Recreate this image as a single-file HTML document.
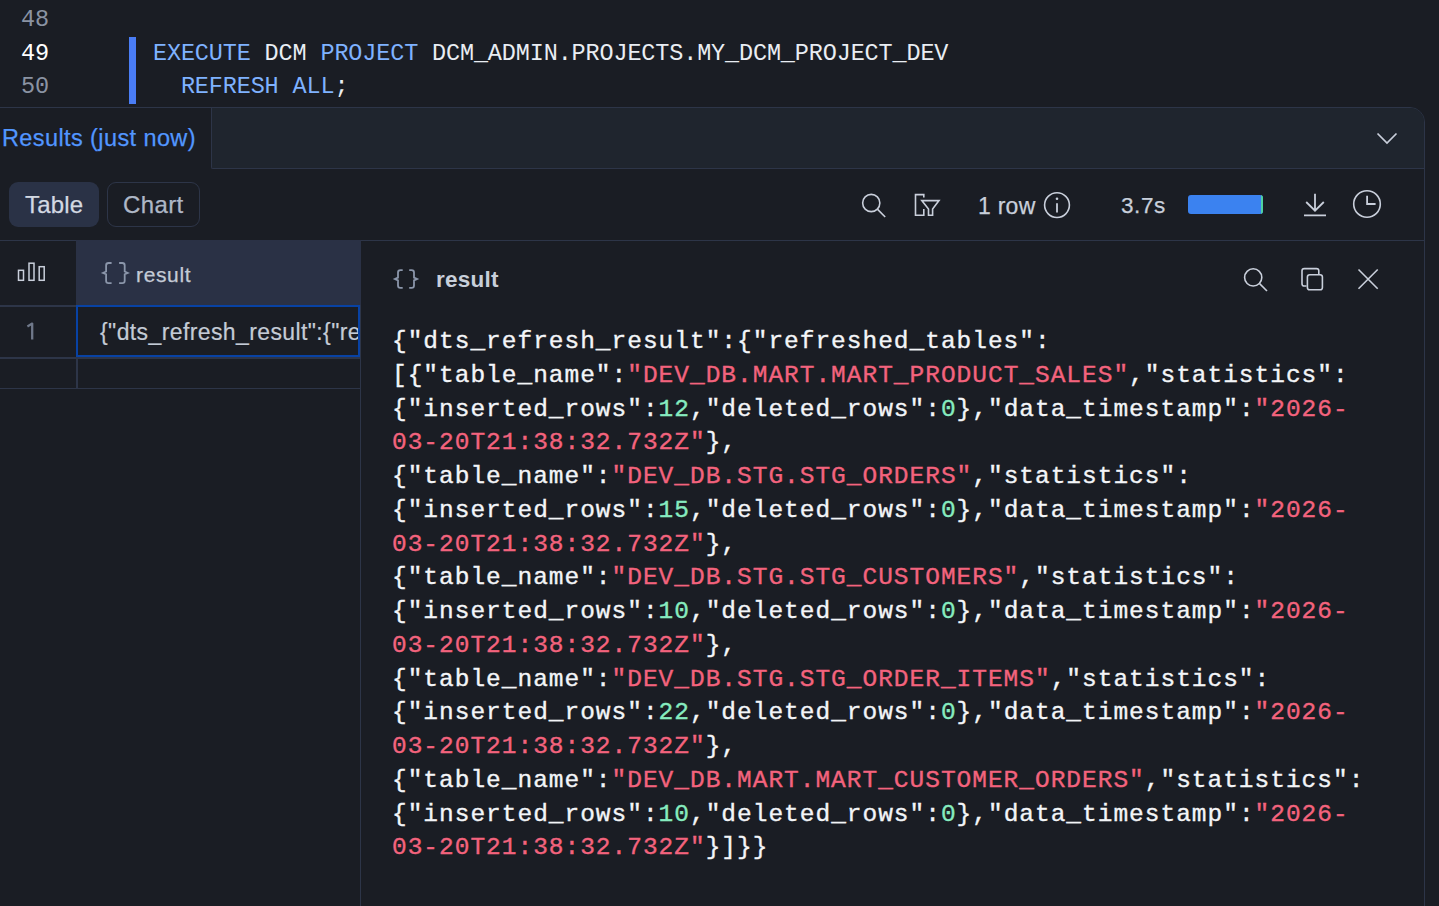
<!DOCTYPE html>
<html><head><meta charset="utf-8">
<style>
*{box-sizing:border-box;margin:0;padding:0}
html,body{width:1439px;height:906px;overflow:hidden;background:#1a1d24}
body{position:relative;font-family:"Liberation Sans",sans-serif;color:#c9d1dc}
.abs{position:absolute;white-space:pre;line-height:1;-webkit-text-stroke:0.25px currentColor}
.mono{font-family:"Liberation Mono",monospace}
.ln{position:absolute;left:21px;font-size:23.5px;letter-spacing:-0.15px;color:#8a93a3;line-height:1;white-space:pre}
.code{position:absolute;left:153px;font-size:23.5px;letter-spacing:-0.15px;line-height:1;white-space:pre;color:#e9edf3}
.kw{color:#7fb2ff}
#panel{position:absolute;left:-20px;top:107px;width:1445px;height:830px;border:1px solid #2d3548;border-top-right-radius:15px;background:#1a1d24}
#strip{position:absolute;left:211px;top:108px;width:1213px;height:61px;background:#1f252e;border-left:1px solid #2d3548;border-bottom:1px solid #2d3548;border-top-right-radius:14px;border-bottom-left-radius:2px}
.btn{position:absolute;top:182px;height:45px;border-radius:9px}
.hline{position:absolute;height:1px;background:#2d3548}
.vline{position:absolute;width:1px;background:#2d3548}
.json{position:absolute;left:392px;top:325px;font-size:24.5px;letter-spacing:0.98px;line-height:33.75px;color:#f3f5f8;white-space:pre;-webkit-text-stroke:0.35px currentColor}
.s{color:#f3637d}
.n{color:#86ebbf}
svg{position:absolute;overflow:visible;z-index:5}
.ic{fill:none;stroke:#c9cfdb;stroke-width:1.6}
</style></head><body>

<!-- editor -->
<div class="ln mono" style="top:8px">48</div>
<div class="ln mono" style="top:42px;color:#ffffff">49</div>
<div class="ln mono" style="top:75px">50</div>
<div class="abs" style="left:129px;top:37px;width:7px;height:67px;background:#4a7df5"></div>
<div class="code mono" style="top:42px"><span class="kw">EXECUTE</span> DCM <span class="kw">PROJECT</span> DCM_ADMIN.PROJECTS.MY_DCM_PROJECT_DEV</div>
<div class="code mono" style="top:75px">  <span class="kw">REFRESH</span> <span class="kw">ALL</span>;</div>

<!-- results panel -->
<div id="panel"></div>
<div id="strip"></div>
<div class="abs" style="left:2px;top:127px;font-size:23.5px;letter-spacing:0.4px;color:#5296ff">Results (just now)</div>
<svg style="left:0;top:0" width="1439" height="906">
  <path class="ic" d="M1377.5 133.5 L1387 143 L1396.5 133.5" style="stroke-width:1.7"/>
</svg>

<!-- toolbar -->
<div class="btn" style="left:9px;width:90px;background:#2a3246"></div>
<div class="btn" style="left:107px;width:93px;border:1px solid #2d3548"></div>
<div class="abs" style="left:25px;top:193px;font-size:24px;letter-spacing:0.15px;color:#d3d9e2">Table</div>
<div class="abs" style="left:123px;top:193px;font-size:24px;letter-spacing:0.4px;color:#aeb7c6">Chart</div>

<div class="abs" style="left:978px;top:195px;font-size:23px;letter-spacing:0.25px;color:#c8cfdb">1 row</div>
<div class="abs" style="left:1121px;top:195px;font-size:22.5px;letter-spacing:0.6px;color:#c8cfdb">3.7s</div>
<div class="abs" style="left:1188px;top:195px;width:75px;height:19px;border-radius:3px;background:#3b82f0;overflow:hidden"><div style="position:absolute;right:0;top:0;width:2px;height:19px;background:#4fd1a0"></div></div>

<svg style="left:0;top:0" width="1439" height="906">
  <!-- search -->
  <circle class="ic" cx="871.25" cy="203" r="8.6"/>
  <path class="ic" d="M877.6 209.4 L885.2 217"/>
  <!-- filter -->
  <path class="ic" d="M923.8 197.5 L923.8 194.6 L915.5 194.6 L915.5 215.3 L923.8 215.3 L923.8 209"/>
  <path class="ic" d="M921.8 200.6 L939 200.6 L932.6 209 L932.6 215.3 L928.5 215.3 L928.5 209 Z"/>
  <!-- info -->
  <circle class="ic" cx="1057" cy="205.1" r="12.4"/>
  <circle cx="1057" cy="198.8" r="1.3" fill="#c9cfdb"/>
  <path class="ic" d="M1057 203.2 L1057 212.5" style="stroke-width:1.8"/>
  <!-- download -->
  <path class="ic" d="M1315 193.7 L1315 210.5 M1306.2 202 L1315 210.7 L1323.8 202 M1304 215.4 L1326 215.4" style="stroke-width:1.8"/>
  <!-- clock -->
  <circle class="ic" cx="1367" cy="204" r="13.3"/>
  <path class="ic" d="M1367.1 195.8 L1367.1 204 L1375.6 204" style="stroke-width:1.8"/>
  <!-- table header bar icon -->
  <rect class="ic" x="18.5" y="270.3" width="5" height="10" style="stroke-width:1.5"/>
  <rect class="ic" x="29" y="263.2" width="5" height="17.1" style="stroke-width:1.5"/>
  <rect class="ic" x="39.2" y="266.7" width="5" height="13.6" style="stroke-width:1.5"/>
  <!-- detail header icons -->
  <circle class="ic" cx="1253.2" cy="277.4" r="8.6"/>
  <path class="ic" d="M1259.6 283.6 L1267 291"/>
  <path class="ic" d="M1306.5 286 L1304.3 286 Q1302 286 1302 283.7 L1302 270.8 Q1302 268.6 1304.3 268.6 L1316.5 268.6 Q1318.8 268.6 1318.8 270.8 L1318.8 274.5"/>
  <rect class="ic" x="1307.4" y="274.7" width="15" height="15" rx="2.3"/>
  <path class="ic" d="M1358.5 269.5 L1377.7 288.7 M1377.7 269.5 L1358.5 288.7"/>
  <!-- row number 1 -->
  <path class="ic" style="stroke:#6f788a;stroke-width:2.3;stroke-linejoin:round" d="M27.4 326.4 L32.2 323.6 L32.2 339.4"/>
  <!-- braces -->
  <path class="ic" style="stroke:#8b96aa;stroke-width:1.8" d="M111.6 263 L108.5 263 Q106.1 263 106.1 265.4 L106.1 271.5 L103.0 272.9 L106.1 274.29999999999995 L106.1 280.8 Q106.1 283.2 108.5 283.2 L111.6 283.2"/>
  <path class="ic" style="stroke:#8b96aa;stroke-width:1.8" d="M119.1 263 L122.3 263 Q124.7 263 124.7 265.4 L124.7 271.5 L127.8 272.9 L124.7 274.29999999999995 L124.7 280.8 Q124.7 283.2 122.3 283.2 L119.1 283.2"/>
  <path class="ic" style="stroke:#8b96aa;stroke-width:1.8" d="M402.7 270.2 L400.4 270.2 Q398 270.2 398 272.59999999999997 L398 277.6 L394.9 279 L398 280.4 L398 285.40000000000003 Q398 287.8 400.4 287.8 L402.7 287.8"/>
  <path class="ic" style="stroke:#8b96aa;stroke-width:1.8" d="M409.2 270.2 L411.6 270.2 Q414 270.2 414 272.59999999999997 L414 277.6 L417.1 279 L414 280.4 L414 285.40000000000003 Q414 287.8 411.6 287.8 L409.2 287.8"/>
</svg>

<div class="hline" style="left:0;top:240px;width:1424px"></div>

<!-- table -->
<div class="abs" style="left:76px;top:240px;width:285px;height:65px;background:#2a3145"></div>
<div class="hline" style="left:0;top:305px;width:76px;height:2px"></div>
<div class="hline" style="left:0;top:357px;width:360px;height:2px"></div>
<div class="hline" style="left:0;top:388px;width:360px"></div>
<div class="vline" style="left:76px;top:357px;height:31px;width:2px"></div>
<div class="vline" style="left:360px;top:305px;height:601px"></div>
<div class="abs" style="left:76px;top:305px;width:284px;height:52px;border:2px solid #0842a4;overflow:hidden">
  <div style="position:absolute;left:22px;top:14px;font-size:23px;letter-spacing:0.39px;color:#c4cbd6;-webkit-text-stroke:0.2px currentColor;white-space:pre;line-height:1">{"dts_refresh_result":{"refreshed</div>
</div>

<div class="abs" style="left:136px;top:264px;font-size:21px;letter-spacing:0.64px;color:#c4cbd6">result</div>

<!-- detail panel -->
<div class="abs" style="left:436px;top:269px;font-size:22.5px;font-weight:bold;letter-spacing:0.26px;color:#c8cfda;-webkit-text-stroke:0">result</div>

<div class="json mono">{"dts_refresh_result":{"refreshed_tables":
[{"table_name":<span class="s">"DEV_DB.MART.MART_PRODUCT_SALES"</span>,"statistics":
{"inserted_rows":<span class="n">12</span>,"deleted_rows":<span class="n">0</span>},"data_timestamp":<span class="s">"2026-
03-20T21:38:32.732Z"</span>},
{"table_name":<span class="s">"DEV_DB.STG.STG_ORDERS"</span>,"statistics":
{"inserted_rows":<span class="n">15</span>,"deleted_rows":<span class="n">0</span>},"data_timestamp":<span class="s">"2026-
03-20T21:38:32.732Z"</span>},
{"table_name":<span class="s">"DEV_DB.STG.STG_CUSTOMERS"</span>,"statistics":
{"inserted_rows":<span class="n">10</span>,"deleted_rows":<span class="n">0</span>},"data_timestamp":<span class="s">"2026-
03-20T21:38:32.732Z"</span>},
{"table_name":<span class="s">"DEV_DB.STG.STG_ORDER_ITEMS"</span>,"statistics":
{"inserted_rows":<span class="n">22</span>,"deleted_rows":<span class="n">0</span>},"data_timestamp":<span class="s">"2026-
03-20T21:38:32.732Z"</span>},
{"table_name":<span class="s">"DEV_DB.MART.MART_CUSTOMER_ORDERS"</span>,"statistics":
{"inserted_rows":<span class="n">10</span>,"deleted_rows":<span class="n">0</span>},"data_timestamp":<span class="s">"2026-
03-20T21:38:32.732Z"</span>}]}}</div>

</body></html>
